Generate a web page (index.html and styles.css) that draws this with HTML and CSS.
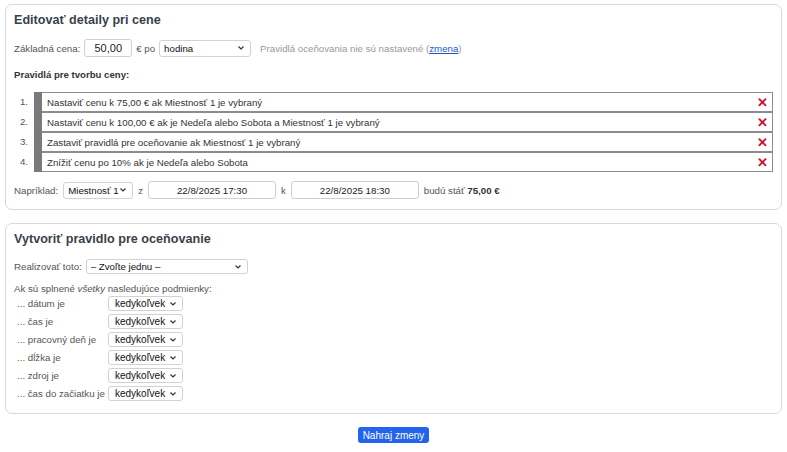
FILE: index.html
```html
<!DOCTYPE html>
<html lang="sk">
<head>
<meta charset="utf-8">
<title>Editovať detaily pri cene</title>
<link rel="stylesheet" href="styles.css">
</head>
<body>
<section class="panel panel-edit">
  <h2 class="panel-title">Editovať detaily pri cene</h2>
  <div class="base-row">
    <label class="lbl">Základná cena:</label>
    <input class="inp inp-price" type="text" value="50,00">
    <span class="lbl">€ po</span>
    <select class="sel sel-unit"><option>hodina</option></select>
    <span class="muted">Pravidlá oceňovania nie sú nastavené (<a href="#" class="link">zmena</a>)</span>
  </div>
  <h3 class="sub-title">Pravidlá pre tvorbu ceny:</h3>
  <ol class="rules">
    <li class="rule"><span class="rule-num">1.</span><span class="rule-bar"></span><span class="rule-body"><span class="rule-text">Nastaviť cenu k 75,00 € ak Miestnosť 1 je vybraný</span><span class="rule-x">✕</span></span></li>
    <li class="rule"><span class="rule-num">2.</span><span class="rule-bar"></span><span class="rule-body"><span class="rule-text">Nastaviť cenu k 100,00 € ak je Nedeľa alebo Sobota a Miestnosť 1 je vybraný</span><span class="rule-x">✕</span></span></li>
    <li class="rule"><span class="rule-num">3.</span><span class="rule-bar"></span><span class="rule-body"><span class="rule-text">Zastaviť pravidlá pre oceňovanie ak Miestnosť 1 je vybraný</span><span class="rule-x">✕</span></span></li>
    <li class="rule"><span class="rule-num">4.</span><span class="rule-bar"></span><span class="rule-body"><span class="rule-text">Znížiť cenu po 10% ak je Nedeľa alebo Sobota</span><span class="rule-x">✕</span></span></li>
  </ol>
  <div class="example-row">
    <span class="lbl">Napríklad:</span>
    <select class="sel sel-room"><option>Miestnosť 1</option></select>
    <span class="lbl">z</span>
    <input class="inp inp-date" type="text" value="22/8/2025 17:30">
    <span class="lbl">k</span>
    <input class="inp inp-date" type="text" value="22/8/2025 18:30">
    <span class="lbl">budú stáť <b class="price">75,00 €</b></span>
  </div>
</section>

<section class="panel panel-create">
  <h2 class="panel-title">Vytvoriť pravidlo pre oceňovanie</h2>
  <div class="action-row">
    <span class="lbl">Realizovať toto:</span>
    <select class="sel sel-action"><option>– Zvoľte jednu –</option></select>
  </div>
  <p class="cond-intro">Ak sú splnené <i>všetky</i> nasledujúce podmienky:</p>
  <div class="conds">
    <span class="cond-lbl">... dátum je</span><select class="sel sel-cond"><option>kedykoľvek</option></select>
    <span class="cond-lbl">... čas je</span><select class="sel sel-cond"><option>kedykoľvek</option></select>
    <span class="cond-lbl">... pracovný deň je</span><select class="sel sel-cond"><option>kedykoľvek</option></select>
    <span class="cond-lbl">... dĺžka je</span><select class="sel sel-cond"><option>kedykoľvek</option></select>
    <span class="cond-lbl">... zdroj je</span><select class="sel sel-cond"><option>kedykoľvek</option></select>
    <span class="cond-lbl">... čas do začiatku je</span><select class="sel sel-cond"><option>kedykoľvek</option></select>
  </div>
</section>

<div class="actions">
  <button class="btn-primary" type="button">Nahraj zmeny</button>
</div>
</body>
</html>
```
FILE: styles.css
```css
* { box-sizing: border-box; }
html, body { background: #fff; }
body {
  margin: 4px 5px;
  font-family: "Liberation Sans", Arial, sans-serif;
  font-size: 9.7px;
  color: #444;
}
.panel {
  border: 1px solid #d9d9d9;
  border-radius: 7px;
  padding: 6px 8px 8px 8px;
}
.panel-edit { height: 206px; }
.panel-create { margin-top: 13px; height: 191px; }
.panel-title {
  margin: 0;
  font-size: 12.6px;
  line-height: 18px;
  font-weight: bold;
  color: #3a3f4b;
}
.lbl { color: #555; }
.muted { color: #999; margin-left: 5px; }
.link { color: #1a56c4; text-decoration: underline; }
.base-row {
  display: flex;
  align-items: center;
  gap: 4px;
  margin-top: 10px;
  height: 18px;
}
.inp {
  font-family: inherit;
  font-size: 9.7px;
  color: #222;
  border: 1px solid #cfcfcf;
  border-radius: 3px;
  background: #fff;
  text-align: center;
  padding: 0 4px;
  outline: none;
}
.inp-price { width: 48px; height: 18px; font-size: 11px; }
.inp-date { width: 128px; height: 18px; }
.sel {
  -webkit-appearance: none;
  appearance: none;
  font-family: inherit;
  font-size: 9.7px;
  color: #111;
  border: 1px solid #d2d2d2;
  border-radius: 3px;
  background: #fff url("data:image/svg+xml;utf8,<svg xmlns='http://www.w3.org/2000/svg' width='8' height='6' viewBox='0 0 8 6'><path d='M1.5 1.5 L4 4 L6.5 1.5' fill='none' stroke='%23333' stroke-width='1.2'/></svg>") no-repeat right 5px center;
  padding: 0 12px 0 4px;
  outline: none;
}
.sel-unit { width: 92px; height: 17px; }
.sel-room { width: 70px; height: 17px; }
.sel-action { width: 162px; height: 15px; }
.sel-cond { width: 75px; height: 15px; font-size: 10px; padding-left: 6px; }
.sub-title {
  margin: 12px 0 0 0;
  font-size: 9.6px;
  line-height: 12px;
  font-weight: bold;
  color: #333;
}
.rules {
  list-style: none;
  margin: 11px 0 0 0;
  padding: 0;
}
.rule {
  display: flex;
  height: 20px;
}
.rule-num {
  width: 20px;
  text-align: center;
  line-height: 20px;
  color: #555;
}
.rule-bar {
  width: 8px;
  background: #7a7a7a;
}
.rule-body {
  flex: 1;
  display: flex;
  align-items: center;
  justify-content: space-between;
  border: 1px solid #8c8c8c;
  border-left: none;
  padding: 0 4px 0 5px;
  color: #333;
}
.rule-x {
  color: #c8102e;
  font-weight: bold;
  font-size: 13px;
  line-height: 1;
}
.example-row {
  display: flex;
  align-items: center;
  gap: 5px;
  margin-top: 9px;
  height: 18px;
}
.price { color: #333; }
.action-row {
  display: flex;
  align-items: center;
  gap: 4px;
  margin-top: 11px;
  height: 15px;
}
.cond-intro {
  margin: 9px 0 0 0;
  line-height: 12px;
  color: #555;
}
.conds {
  display: grid;
  grid-template-columns: 91px 75px;
  grid-auto-rows: 15px;
  row-gap: 3px;
  margin-top: 1px;
  padding-left: 3px;
  align-items: center;
}
.cond-lbl { color: #555; line-height: 15px; }
.actions {
  display: flex;
  justify-content: center;
  margin-top: 13px;
}
.btn-primary {
  font-family: inherit;
  font-size: 10px;
  color: #fff;
  background: #2463eb;
  border: none;
  border-radius: 3px;
  width: 71px;
  height: 16px;
  padding: 0;
}
```
